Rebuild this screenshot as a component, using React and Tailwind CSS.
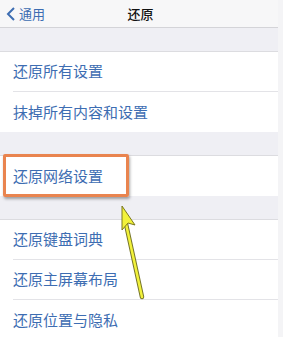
import React from 'react';

const font = { fontFamily: '"Noto Sans CJK SC", "Noto Sans", sans-serif' };

function Row({ label, last }) {
  return (
    <div className="h-10 bg-white pl-[13px] flex">
      <div className={`flex-1 flex items-center text-[15px] text-[#3d6db2] ${last ? '' : 'border-b border-[#e3e3e7]'}`}>
        {label}
      </div>
    </div>
  );
}

function Gap() {
  return <div className="h-6 bg-[#efeff4] border-b border-[#dcdce0]" />;
}

export default function App() {
  return (
    <div className="relative w-[283px] h-[337px] overflow-hidden bg-[#f4f4f6]" style={font}>
      <div className="mr-[5px]">
        {/* nav bar */}
        <div className="h-7 bg-[#f7f7f8] border-b border-[#d4d4d8] flex items-center relative">
          <div className="flex items-center pl-[6px] text-[13px] text-[#3d6db2]">
            <svg width="10" height="14" viewBox="0 0 10 14" className="mr-[3px]">
              <path d="M8 1 L2 7 L8 13" fill="none" stroke="#3d6db2" strokeWidth="2" />
            </svg>
            通用
          </div>
          <div className="absolute inset-0 flex items-center justify-center text-[13px] text-[#111] font-medium pl-[3px]">还原</div>
        </div>

        <Gap />
        <Row label="还原所有设置" />
        <Row label="抹掉所有内容和设置" last />
        <Gap />
        <Row label="还原网络设置" last />
        <Gap />
        <Row label="还原键盘词典" />
        <Row label="还原主屏幕布局" />
        <Row label="还原位置与隐私" last />
      </div>

      {/* orange highlight */}
      <div className="absolute left-[3px] top-[154px] w-[126px] h-[43px] border-[3px] border-[#e9844f] rounded-[2px] shadow-[1px_2px_3px_rgba(0,0,0,0.35)]" />

      {/* yellow arrow */}
      <svg className="absolute left-0 top-0" width="283" height="337" viewBox="0 0 283 337">
        <line x1="142" y1="297" x2="126" y2="224" stroke="#77762a" strokeWidth="4.5" strokeLinecap="round" />
        <line x1="142" y1="297" x2="126" y2="224" stroke="#f2f23a" strokeWidth="2.5" strokeLinecap="round" />
        <path d="M122 206 L135 225 L128 223 L122 230 Z" fill="#f2f23a" stroke="#7a7820" strokeWidth="1" strokeLinejoin="round" />
      </svg>
    </div>
  );
}
